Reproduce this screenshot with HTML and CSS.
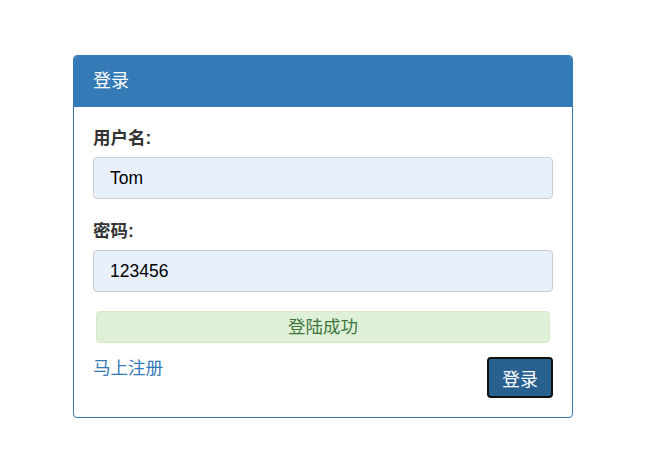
FILE: index.html
```html
<!DOCTYPE html>
<html lang="zh">
<head>
<meta charset="utf-8">
<link rel="stylesheet" href="styles.css">
</head>
<body>
<div class="page">
  <div class="panel">
    <div class="panel-heading">登录</div>
    <div class="panel-body">
      <div class="form-group">
        <label class="label">用户名:</label>
        <div class="input">Tom</div>
      </div>
      <div class="form-group">
        <label class="label">密码:</label>
        <div class="input">123456</div>
      </div>
      <div class="alert">登陆成功</div>
      <div class="footer">
        <a class="link" href="#">马上注册</a>
        <button class="btn">登录</button>
      </div>
    </div>
  </div>
</div>
</body>
</html>
```
FILE: styles.css
```css
html, body {
  margin: 0;
  padding: 0;
  background: #fff;
}
body {
  font-family: "Liberation Sans", "Noto Sans CJK SC", sans-serif;
  color: #333;
}
.page {
  padding: 55px 0 0 73px;
}
.panel {
  box-sizing: border-box;
  width: 500px;
  border: 1px solid #337ab7;
  border-radius: 4px;
  overflow: hidden;
}
.panel-heading {
  background: #337ab7;
  color: #fff;
  font-size: 18px;
  line-height: 22px;
  padding: 14px 19px 15px;
}
.panel-body {
  padding: 20px 19px 19px;
  display: flex;
  flex-direction: column;
}
.form-group {
  display: flex;
  flex-direction: column;
  margin-bottom: 21px;
}
.form-group + .form-group {
  margin-bottom: 19px;
}
.label {
  font-weight: bold;
  font-size: 17.5px;
  line-height: 22px;
  margin-bottom: 8px;
}
.input {
  height: 42px;
  box-sizing: border-box;
  border: 1px solid #ccc;
  border-radius: 4px;
  background: #e8f0fe;
  color: #000;
  font-size: 17.5px;
  line-height: 40px;
  padding: 0 16px;
}
.alert {
  margin: 0 3px;
  height: 32px;
  box-sizing: border-box;
  background: #dff0d8;
  border: 1px solid #d6e9c6;
  border-radius: 4px;
  color: #3c763d;
  font-size: 17.5px;
  line-height: 30px;
  text-align: center;
}
.footer {
  display: flex;
  justify-content: space-between;
  align-items: flex-start;
  margin-top: 14px;
}
.link {
  color: #337ab7;
  text-decoration: none;
  font-size: 17.5px;
  line-height: 22px;
}
.btn {
  width: 66px;
  height: 41px;
  box-sizing: border-box;
  background: #286090;
  color: #fff;
  border: 2px solid #111;
  border-radius: 4px;
  font-family: "Noto Sans CJK SC", sans-serif;
  font-size: 18px;
  line-height: 22px;
  padding: 0;
}
```
